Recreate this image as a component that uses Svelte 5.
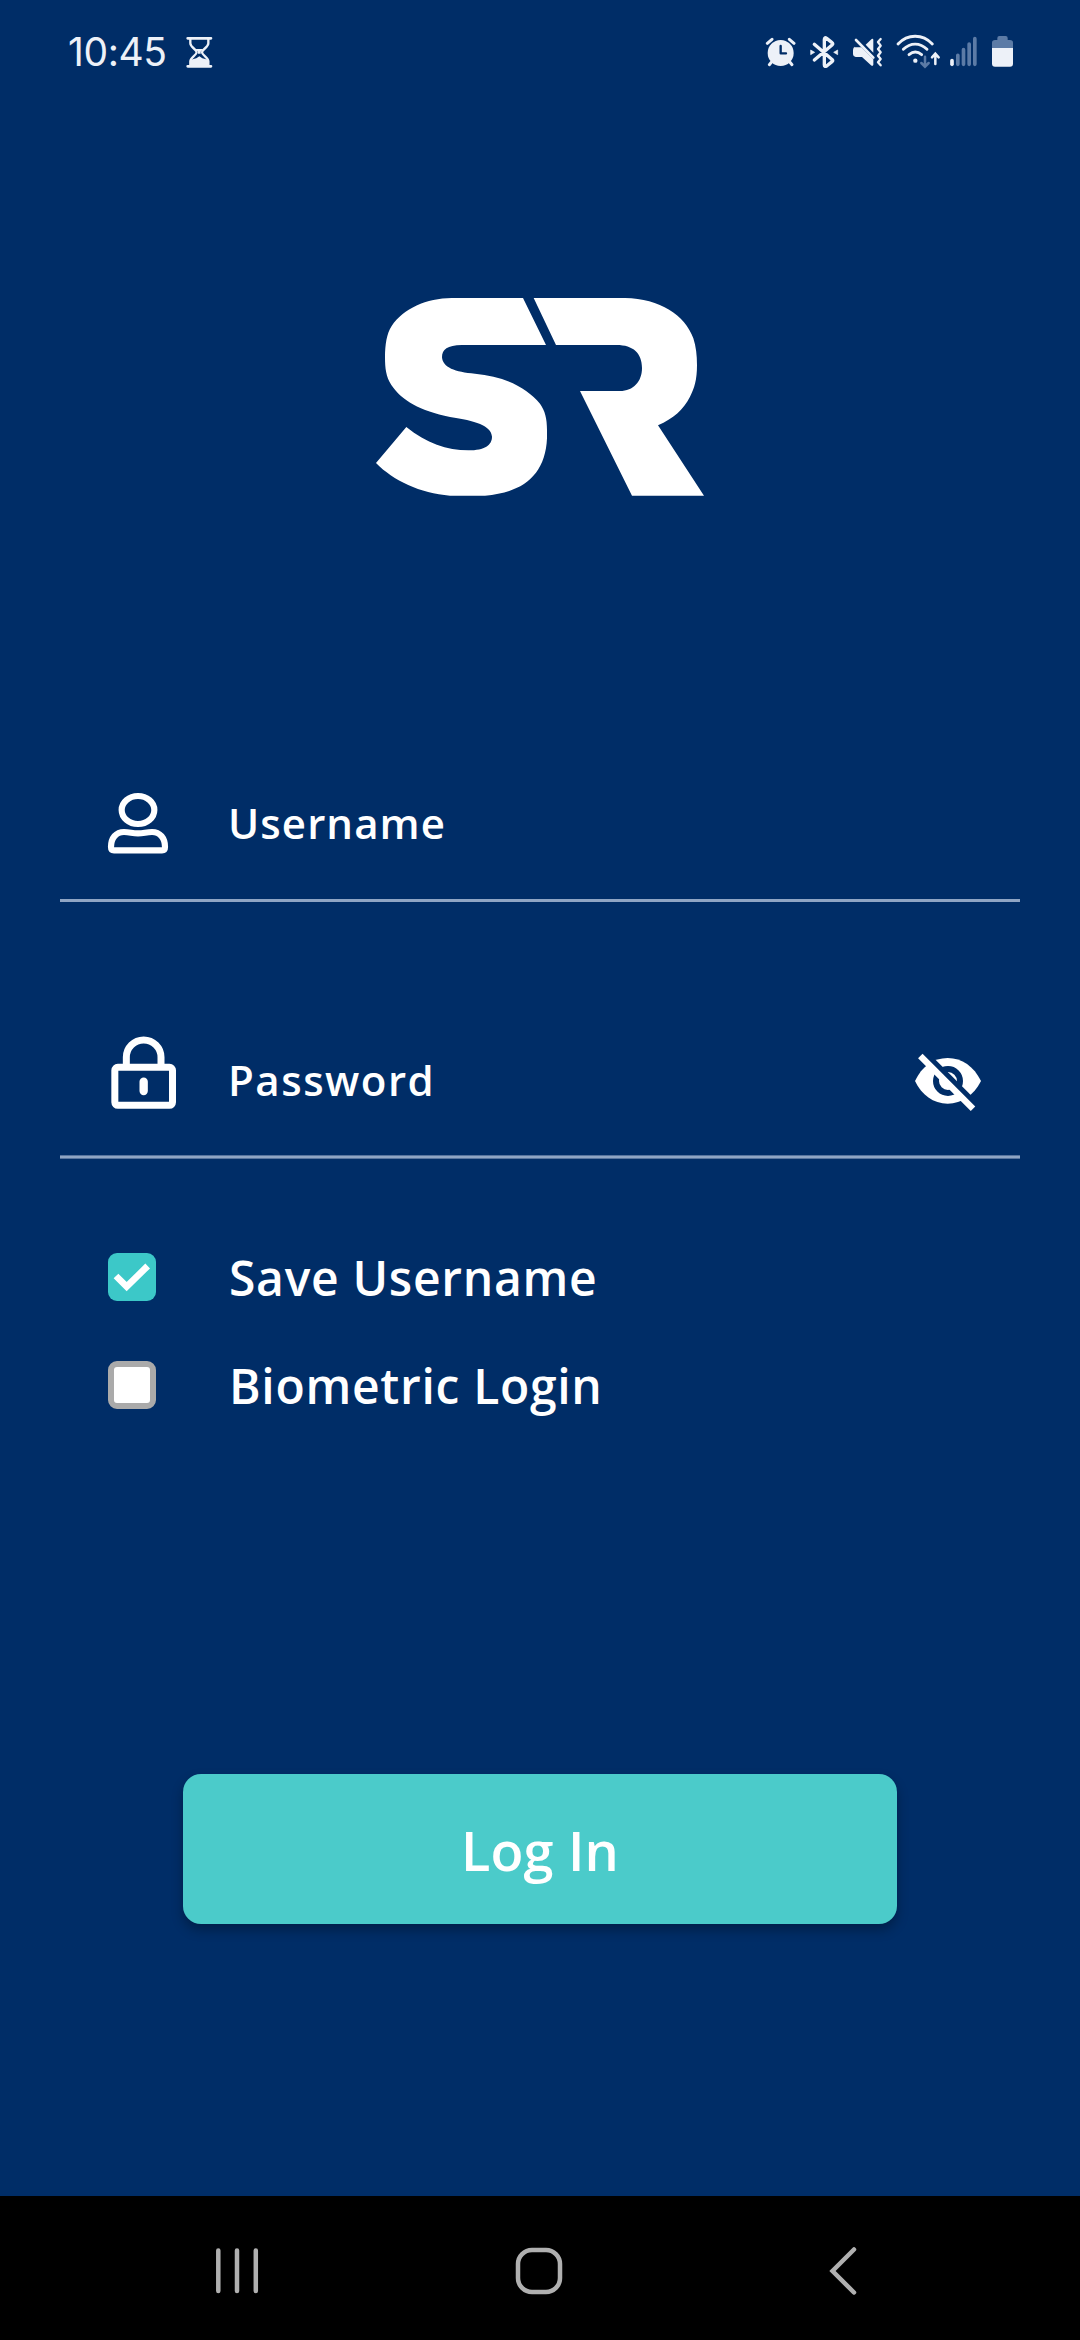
<script lang="ts">
  let username = $state('')
  let saveUsername = $state(true)
  let biometric = $state(false)
  let showPassword = $state(false)

  const options = $derived([
    { id: 'save', label: 'Save Username', checked: saveUsername },
    { id: 'bio',  label: 'Biometric Login', checked: biometric },
  ])

  function toggle(id: string) {
    if (id === 'save') saveUsername = !saveUsername
    else biometric = !biometric
  }
</script>

<div class="screen">
  <header class="status">
    <span class="clock">10:45</span>
    <svg class="hourglass" viewBox="405 0 87 195" width="29" height="65">
      <g fill="none" stroke="#edf1f8" stroke-width="8" stroke-linecap="round" stroke-linejoin="round">
        <path d="M413 55H483M413 139H483" />
        <path d="M421 57V70C421 82 440 88 440 97S421 112 421 124V137M475 57V70C475 82 456 88 456 97S475 112 475 124V137" stroke-width="7" />
      </g>
      <path d="M420 138V124Q421 119 428 118Q440 116 448 109Q456 116 468 118Q475 119 476 124V138Z" fill="#edf1f8" />
      <path d="M436 87H460L452 95V101H444V95Z" fill="#edf1f8" />
    </svg>

    <div class="tray">
      <svg viewBox="45 0 93 195" width="31" height="65">
        <circle cx="92" cy="99" r="39" fill="#edf1f8" />
        <g fill="none" stroke="#edf1f8" stroke-linecap="round">
          <path d="M52 70L66 58M132 70L118 58" stroke-width="9" />
          <path d="M64 127L58 134M120 127L126 134" stroke-width="9" />
        </g>
        <path d="M92 78V100H108" fill="none" stroke="#002d67" stroke-width="7" stroke-linecap="round" stroke-linejoin="round" />
      </svg>
      <svg viewBox="177 0 90 195" width="30" height="65">
        <path d="M193 73L247 119Q250 122 246 125L230 138Q223 142 223 134V59Q223 50 230 55L246 68Q250 71 247 74L193 120" fill="none" stroke="#edf1f8" stroke-width="10" stroke-linecap="round" stroke-linejoin="round" />
        <path d="M182 90L194 97L182 104ZM263 90L251 97L263 104Z" fill="#edf1f8" stroke="#edf1f8" stroke-width="2" />
      </svg>
      <svg viewBox="306 0 93 195" width="31" height="65">
        <path d="M311 82H334L370 118V134Q368 140 363 136L336 111H317Q309 110 309 103V90Q309 82 315 80Z" fill="#edf1f8" />
        <path d="M347 74L365 57Q370 54 370 60V98Z" fill="#edf1f8" />
        <path d="M318 60L370 113" fill="none" stroke="#edf1f8" stroke-width="8" stroke-linecap="round" />
        <path d="M392 57L384 66L392 77L384 87L392 97L384 107L392 117L384 127L392 136" fill="none" stroke="#edf1f8" stroke-width="7" stroke-linecap="round" stroke-linejoin="round" />
      </svg>
      <svg class="wifi" viewBox="30 0 138 195" width="46" height="65">
        <g fill="none" stroke="#edf1f8" stroke-width="8.5" stroke-linecap="round">
          <path d="M39 72C68 41 113 41 142 72" />
          <path d="M55 88C76 67 105 67 126 88" />
          <path d="M72 104C84 94 98 94 110 104" />
        </g>
        <circle cx="91" cy="122" r="6.5" fill="#edf1f8" />
        <path d="M120 110V139M109 129L120 140L131 129" fill="none" stroke="#5c7ba6" stroke-width="7.5" stroke-linecap="round" />
        <path d="M151 132V102M141 112L151 101L161 112" fill="none" stroke="#edf1f8" stroke-width="7.5" stroke-linecap="round" />
      </svg>
      <svg class="signal" viewBox="192 0 87 195" width="29" height="65">
        <g fill="none" stroke="#5c7ba6" stroke-width="11" stroke-linecap="round">
          <path d="M201 122V133" stroke="#edf1f8" />
          <path d="M218.5 106V133M235.5 89V133M252.5 72V133M269.5 56V133" />
        </g>
      </svg>
      <svg viewBox="318 0 69 195" width="23" height="65">
        <path d="M321 85V68Q321 60 330 60H337V54Q337 48 343 48H362Q368 48 368 54V60H375Q384 60 384 68V85Z" fill="#5c7ba6" />
        <path d="M321 84H384V131Q384 140 375 140H330Q321 140 321 131Z" fill="#edf1f8" />
      </svg>
    </div>
  </header>

  <main>
    <svg class="logo" viewBox="0 0 1080 690" width="360" height="230" fill="#fff">
      <path d="M489 54L558 195H305C262 196 246 208 246 232C248 262 285 277 345 281C430 288 500 322 540 371C555 392 561 415 561 450V475C556 585 490 638 375 647H270C180 640 100 602 48 549L139 441C200 490 260 511 325 511C375 511 396 495 396 470C394 437 345 422 270 411C180 392 125 362 94 315C78 290 75 265 75 232C75 195 80 160 95 138C130 85 200 55 275 54Z" />
      <path d="M521 54H795C900 56 975 105 1000 175C1008 200 1011 225 1011 255C1011 300 1003 325 990 350C970 390 940 415 894 436L1032 647H816L660 333H780C820 333 846 305 846 264C846 220 820 195 770 195H588Z" />
    </svg>

    <div class="field user">
      <div class="icon">
        <svg viewBox="165 60 198 198" width="66" height="66" fill="none" stroke="#fff" stroke-width="18.5" stroke-linejoin="round">
          <ellipse cx="264" cy="120" rx="49" ry="42" />
          <path d="M183 231C183 204 198 186 222 186C240 186 246 190 264 190S288 186 306 186C330 186 345 204 345 231Q345 241 336 241H192Q183 241 183 231Z" />
        </svg>
      </div>
      <span class="label">{username || 'Username'}</span>
    </div>
    <div class="line"></div>

    <div class="field pass">
      <div class="icon">
        <svg class="lock" viewBox="177 42 207 231" width="69" height="77" fill="none" stroke="#fff" stroke-width="21">
          <rect x="194.5" y="142" width="173" height="114" rx="9" />
          <path d="M229 140V112A52 52 0 0 1 333 112V140" />
          <path d="M281 185V213" stroke-width="25" stroke-linecap="round" />
        </svg>
      </div>
      <span class="label">Password</span>
      <button class="eye" aria-label="Toggle password" onclick={() => (showPassword = !showPassword)}>
        <svg viewBox="66 63 216 189" width="72" height="63">
          <path d="M75 153C95 110 130 84 173 84S252 110 273 153C252 195 216 221 173 221S95 195 75 153Z" fill="#fff" />
          <circle cx="174" cy="153" r="36" fill="#fff" stroke="#002d67" stroke-width="18" />
          {#if !showPassword}
            <path d="M104 68L262 226" stroke="#002d67" stroke-width="16" />
            <path d="M91 78L249 236" stroke="#fff" stroke-width="19" />
          {/if}
        </svg>
      </button>
    </div>
    <div class="line soft"></div>

    <div class="options">
      {#each options as o (o.id)}
        <div class="option" role="checkbox" tabindex="0" aria-checked={o.checked} onclick={() => toggle(o.id)} onkeydown={() => toggle(o.id)}>
          <div class="box" class:checked={o.checked}>
            {#if o.checked}
              <svg viewBox="53 69 144 144" width="48" height="48">
                <path d="M77 138L109 170L172 108" fill="none" stroke="#fff" stroke-width="20" />
              </svg>
            {/if}
          </div>
          <span class="text">{o.label}</span>
        </div>
      {/each}
    </div>

    <button class="login">Log In</button>
  </main>

  <nav>
    <svg viewBox="0 0 46 48" width="46" height="48" fill="none" stroke="#b0b0b0" stroke-width="4.5" stroke-linecap="round">
      <path d="M4.3 3.5V44M23 3.5V44M41.8 3.5V44" />
    </svg>
    <svg class="home" viewBox="0 0 48 48" width="48" height="48" fill="none" stroke="#b0b0b0" stroke-width="4.5">
      <rect x="3" y="3" width="42" height="42" rx="14" />
    </svg>
    <svg viewBox="0 0 28 48" width="28" height="48" fill="none" stroke="#b0b0b0" stroke-width="4.5" stroke-linecap="round">
      <path d="M25 2.5L3.5 24L25 45.5" />
    </svg>
  </nav>
</div>

<style>
  :global(body) {
    margin: 0;
    background: #002d67;
  }
  .screen {
    width: 1080px;
    height: 2340px;
    display: flex;
    flex-direction: column;
    background: #002d67;
    color: #fff;
    font-family: 'Open Sans', 'Noto Sans', sans-serif;
    font-weight: 600;
  }
  svg {
    display: block;
    flex: none;
  }
  button {
    border: 0;
    padding: 0;
    background: none;
    color: inherit;
    font: inherit;
  }

  .status {
    display: flex;
    height: 65px;
    padding: 20px 66px 0 68px;
  }
  .clock {
    width: 117px;
    font-family: Inter, Roboto, sans-serif;
    font-size: 39px;
    font-weight: 400;
    line-height: 64px;
    letter-spacing: -0.4px;
    color: #edf1f8;
  }
  .tray {
    display: flex;
    gap: 13px;
    margin-left: auto;
  }
  .wifi {
    margin-left: -1px;
  }
  .signal {
    margin-left: -5px;
  }

  main {
    flex: 1;
    display: flex;
    flex-direction: column;
    padding: 195px 60px 0;
  }
  .logo {
    align-self: center;
  }
  .field {
    display: flex;
    align-items: center;
  }
  .user {
    height: 153px;
    margin-top: 236px;
  }
  .pass {
    height: 151px;
    margin-top: 102px;
  }
  .icon {
    width: 123px;
    padding-left: 45px;
  }
  .pass .icon {
    width: 119px;
    padding-left: 49px;
  }
  .lock {
    margin-bottom: 14px;
  }
  .label {
    font-size: 42px;
    line-height: 42px;
    letter-spacing: 1.1px;
  }
  .pass .label {
    letter-spacing: 1.5px;
  }
  .eye {
    margin: 6px 36px 0 auto;
  }
  .line {
    height: 3px;
    background: #8fa5c4;
  }
  .soft {
    height: 2px;
    border: solid #56749f;
    border-width: 1px 0;
  }

  .options {
    display: flex;
    flex-direction: column;
    gap: 60px;
    padding: 94px 0 0 48px;
  }
  .option {
    display: flex;
    align-items: center;
    gap: 73px;
    height: 48px;
  }
  .text {
    padding-top: 2px;
    font-size: 48px;
    line-height: 48px;
    letter-spacing: 0.7px;
  }
  .box {
    box-sizing: border-box;
    width: 48px;
    height: 48px;
    border: 6px solid #aaa;
    border-radius: 9px;
    background: #fff;
  }
  .checked {
    border: 0;
    background: #3cc8c8;
  }

  .login {
    align-self: center;
    width: 714px;
    height: 150px;
    margin-top: 365px;
    padding-top: 2px;
    border-radius: 18px;
    background: #4bcbca;
    box-shadow: 0 6px 12px rgba(0, 0, 0, .3);
    font-size: 54px;
    line-height: 54px;
    letter-spacing: 0.2px;
  }

  nav {
    display: flex;
    align-items: center;
    justify-content: space-between;
    box-sizing: border-box;
    height: 144px;
    padding: 6px 223px 0 214px;
    background: #000;
  }
  .home {
    margin-left: -11px;
  }
</style>
